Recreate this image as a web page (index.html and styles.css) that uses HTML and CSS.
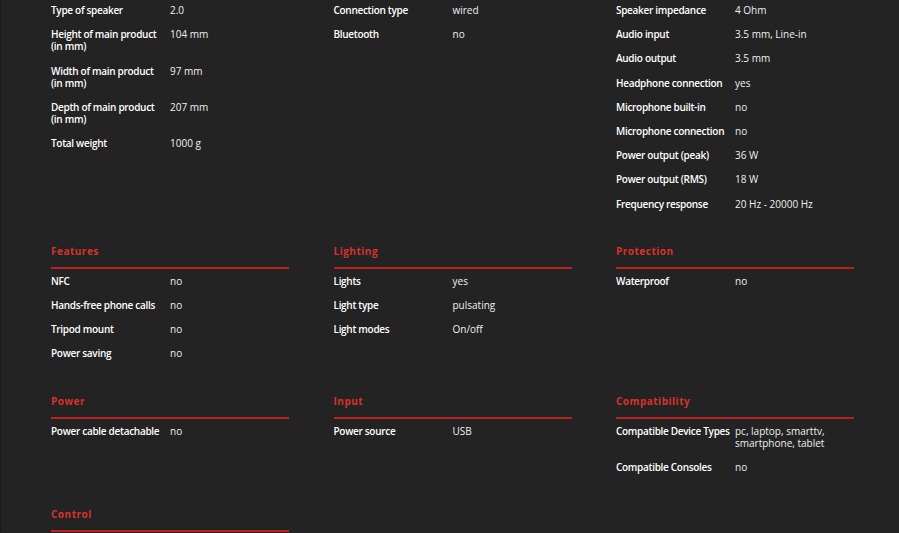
FILE: index.html
```html
<!DOCTYPE html>
<html lang="en">
<head>
    <meta charset="UTF-8">
    <meta name="viewport" content="width=device-width, initial-scale=1.0">
    <title>Specification</title>
    <link rel="stylesheet" href="styles.css">
</head>
<body>

    <div class="specs">
        <!-- row 1 -->
        <div class="group">
            <div class="row"><span class="label">Type of speaker</span><span class="value">2.0</span></div>
            <div class="row"><span class="label">Height of main product (in mm)</span><span class="value">104 mm</span></div>
            <div class="row"><span class="label">Width of main product (in mm)</span><span class="value">97 mm</span></div>
            <div class="row"><span class="label">Depth of main product (in mm)</span><span class="value">207 mm</span></div>
            <div class="row"><span class="label">Total weight</span><span class="value">1000 g</span></div>
        </div>
        <div class="group">
            <div class="row"><span class="label">Connection type</span><span class="value">wired</span></div>
            <div class="row"><span class="label">Bluetooth</span><span class="value">no</span></div>
        </div>
        <div class="group">
            <div class="row"><span class="label">Speaker impedance</span><span class="value">4 Ohm</span></div>
            <div class="row"><span class="label">Audio input</span><span class="value">3.5 mm, Line-in</span></div>
            <div class="row"><span class="label">Audio output</span><span class="value">3.5 mm</span></div>
            <div class="row"><span class="label">Headphone connection</span><span class="value">yes</span></div>
            <div class="row"><span class="label">Microphone built-in</span><span class="value">no</span></div>
            <div class="row"><span class="label">Microphone connection</span><span class="value">no</span></div>
            <div class="row"><span class="label">Power output (peak)</span><span class="value">36 W</span></div>
            <div class="row"><span class="label">Power output (RMS)</span><span class="value">18 W</span></div>
            <div class="row"><span class="label">Frequency response</span><span class="value">20 Hz - 20000 Hz</span></div>
        </div>

        <!-- row 2 -->
        <div class="group">
            <h3>Features</h3>
            <div class="row"><span class="label">NFC</span><span class="value">no</span></div>
            <div class="row"><span class="label">Hands-free phone calls</span><span class="value">no</span></div>
            <div class="row"><span class="label">Tripod mount</span><span class="value">no</span></div>
            <div class="row"><span class="label">Power saving</span><span class="value">no</span></div>
        </div>
        <div class="group">
            <h3>Lighting</h3>
            <div class="row"><span class="label">Lights</span><span class="value">yes</span></div>
            <div class="row"><span class="label">Light type</span><span class="value">pulsating</span></div>
            <div class="row"><span class="label">Light modes</span><span class="value">On/off</span></div>
        </div>
        <div class="group">
            <h3>Protection</h3>
            <div class="row"><span class="label">Waterproof</span><span class="value">no</span></div>
        </div>

        <!-- row 3 -->
        <div class="group">
            <h3>Power</h3>
            <div class="row"><span class="label">Power cable detachable</span><span class="value">no</span></div>
        </div>
        <div class="group">
            <h3>Input</h3>
            <div class="row"><span class="label">Power source</span><span class="value">USB</span></div>
        </div>
        <div class="group">
            <h3>Compatibility</h3>
            <div class="row"><span class="label">Compatible Device Types</span><span class="value">pc, laptop, smarttv, smartphone, tablet</span></div>
            <div class="row"><span class="label">Compatible Consoles</span><span class="value">no</span></div>
        </div>

        <!-- row 4 -->
        <div class="group">
            <h3>Control</h3>
        </div>
    </div>

</body>
</html>
```

FILE: styles.css
```css
body {
    margin: 0;
    padding: 0;
    background: #232323;
    color: #fff;
    font-family: 'Open Sans', 'Noto Sans', sans-serif;
    font-size: 10px;
    border-left: 1px solid #1a1a1a;
}

.specs {
    display: grid;
    grid-template-columns: repeat(3, 238px);
    column-gap: 44.5px;
    row-gap: 28px;
    margin-top: -2px;
    padding-left: 50px;
}

.group h3 {
    margin: 0;
    padding-bottom: 9px;
    font-size: 10px;
    line-height: 14px;
    font-weight: 700;
    letter-spacing: 0.5px;
    color: #d9312d;
    border-bottom: 2px solid #b8221f;
}

.row {
    display: flex;
    padding: 6px 0;
    line-height: 12.2px;
}

.label {
    width: 115px;
    margin-right: 4px;
    flex-shrink: 0;
    font-weight: 600;
    letter-spacing: -0.3px;
}

.value {
    flex: 1;
    color: #f0f0f0;
}
```
